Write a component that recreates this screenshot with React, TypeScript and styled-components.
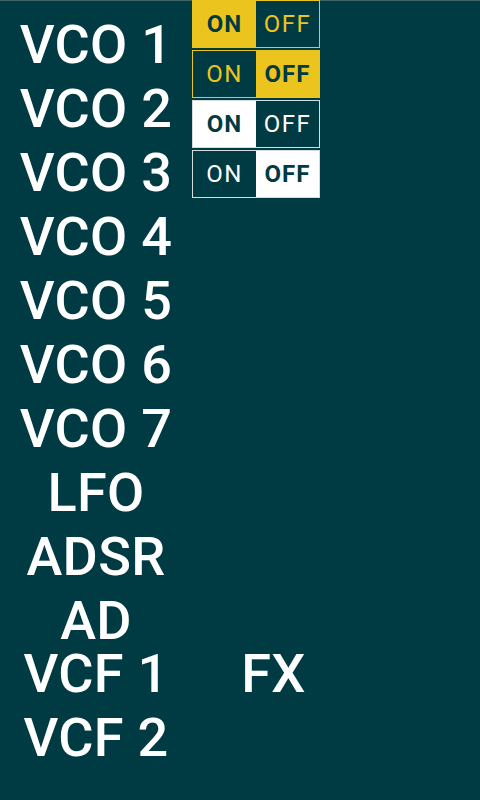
import React from "react";
import styled, { createGlobalStyle } from "styled-components";

const DARK = "#003b44";
const YELLOW = "#ebc51e";

const Global = createGlobalStyle`
  html, body {
    margin: 0;
    padding: 0;
    background: linear-gradient(#3f6469 0 1px, ${DARK} 1px);
    min-height: 800px;
    font-family: Roboto, "Liberation Sans", sans-serif;
  }
`;

const Page = styled.div`
  width: 480px;
  min-height: 800px;
  display: flex;
  flex-direction: column;
`;

const Top = styled.div`
  display: flex;
  align-items: flex-start;
`;

const LabelColumn = styled.div`
  width: 192px;
  padding-top: 19px;
  display: flex;
  flex-direction: column;
  gap: 12px;
`;

const Label = styled.div`
  color: #ffffff;
  font-size: 54px;
  font-weight: 500;
  line-height: 52px;
  height: 52px;
  text-align: center;
  white-space: nowrap;
  letter-spacing: 0.3px;
`;

const ToggleColumn = styled.div`
  display: flex;
  flex-direction: column;
  gap: 2px;
`;

const Toggle = styled.div<{ $border: string }>`
  width: 128px;
  height: 48px;
  box-sizing: border-box;
  border: 1px solid ${(p) => p.$border};
  display: grid;
  grid-template-columns: 1fr 1fr;
  background: ${DARK};
`;

const Segment = styled.div<{ $active: boolean; $accent: string }>`
  display: flex;
  align-items: center;
  justify-content: center;
  background: ${(p) => (p.$active ? p.$accent : DARK)};
  color: ${(p) => (p.$active ? DARK : p.$accent)};
  font-size: 24px;
  font-weight: ${(p) => (p.$active ? 700 : 400)};
  letter-spacing: ${(p) => (p.$active ? "1px" : "1.5px")};
  line-height: 1;
`;

const Bottom = styled.div`
  display: grid;
  grid-template-columns: 192px 163px;
  margin-top: 1px;
`;

const BottomColumn = styled.div`
  display: flex;
  flex-direction: column;
  gap: 12px;
`;

const labels = [
  "VCO 1",
  "VCO 2",
  "VCO 3",
  "VCO 4",
  "VCO 5",
  "VCO 6",
  "VCO 7",
  "LFO",
  "ADSR",
  "AD",
];

const toggles = [
  { accent: YELLOW, border: YELLOW, on: true },
  { accent: YELLOW, border: YELLOW, on: false },
  { accent: "#ffffff", border: "#d6dcdd", on: true },
  { accent: "#ffffff", border: "#d6dcdd", on: false },
];

export default function App() {
  return (
    <Page>
      <Global />
      <Top>
        <LabelColumn>
          {labels.map((l) => (
            <Label key={l}>{l}</Label>
          ))}
        </LabelColumn>
        <ToggleColumn>
          {toggles.map((t, i) => (
            <Toggle key={i} $border={t.border}>
              <Segment $active={t.on} $accent={t.accent}>ON</Segment>
              <Segment $active={!t.on} $accent={t.accent}>OFF</Segment>
            </Toggle>
          ))}
        </ToggleColumn>
      </Top>
      <Bottom>
        <BottomColumn>
          <Label>VCF 1</Label>
          <Label>VCF 2</Label>
        </BottomColumn>
        <BottomColumn>
          <Label>FX</Label>
        </BottomColumn>
      </Bottom>
    </Page>
  );
}
